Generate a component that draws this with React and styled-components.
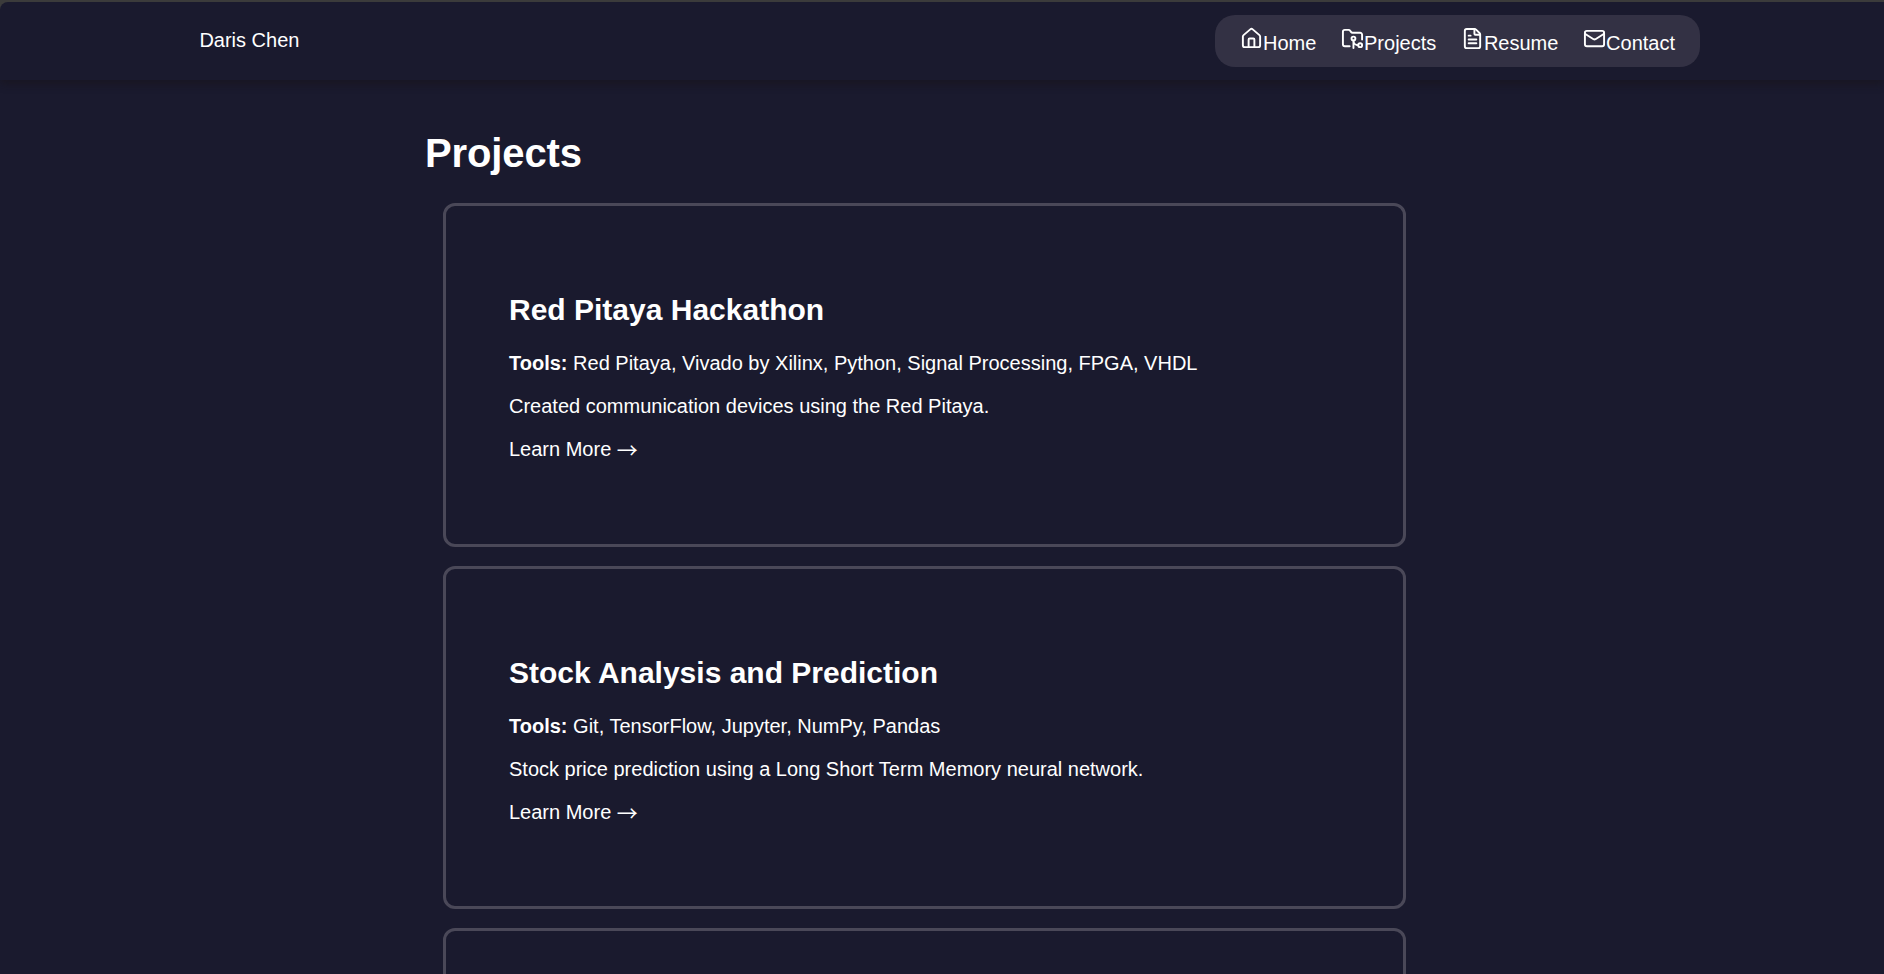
import React from "react";
import styled, { createGlobalStyle } from "styled-components";
import { House, FolderGit2, FileText, Mail } from "lucide-react";

const GlobalStyle = createGlobalStyle`
  html, body { margin: 0; background: #1a1a2e; }
  body {
    color: #fff;
    font: 20px/23px "Liberation Sans", Arial, sans-serif;
    overflow: hidden;
  }
`;

const Frame = styled.div`
  height: 974px;
  box-sizing: border-box;
  overflow: hidden;
  padding-top: 2px;
  background: #3b3b3b;
`;

const Page = styled.div`
  height: 972px;
  overflow: hidden;
  background: #1a1a2e;
  border-top-left-radius: 8px;
`;

const Header = styled.header`
  height: 78px;
  box-sizing: border-box;
  padding: 13px 184px 0 199.4px;
  display: flex;
  justify-content: space-between;
  align-items: flex-start;
  box-shadow: 0 4px 8px rgba(24, 18, 20, 0.45);
`;

const Brand = styled.a`
  margin-top: 14px;
`;

const Nav = styled.nav`
  width: 485px;
  height: 52px;
  box-sizing: border-box;
  padding: 10px 25px 0 25px;
  display: flex;
  justify-content: space-between;
  border-radius: 20px;
  background: #333144;
`;

const NavLink = styled.a`
  display: flex;
  height: 32px;
  svg { width: 23px; height: 23px; margin-top: 2px; flex: none; }
  span { margin-top: 7px; }
`;

const Main = styled.main`
  width: 1000px;
  padding: 50px 0 0 425px;
`;

const Title = styled.h1`
  margin: 0;
  font-size: 40px;
  line-height: 46px;
  letter-spacing: -0.12px;
`;

const List = styled.div`
  width: 963px;
  margin: 27px 0 0 18px;
  display: flex;
  flex-direction: column;
  gap: 19px;
`;

const Card = styled.article`
  height: 343.5px;
  flex: none;
  box-sizing: border-box;
  padding: 87px 63px 0;
  border: 3px solid #4a4858;
  border-radius: 12px;
`;

const CardTitle = styled.h2`
  margin: 0 0 25px;
  font-size: 30px;
  line-height: 34px;
`;

const Text = styled.p`
  margin: 0 0 20px;
`;

const Arrow = styled.span`
  font-family: "Noto Sans CJK JP", sans-serif;
  font-size: 21px;
  line-height: 0;
  vertical-align: -2px;
`;

const links = [
  ["Home", House],
  ["Projects", FolderGit2],
  ["Resume", FileText],
  ["Contact", Mail],
];

const projects = [
  {
    title: "Red Pitaya Hackathon",
    tools: "Red Pitaya, Vivado by Xilinx, Python, Signal Processing, FPGA, VHDL",
    text: "Created communication devices using the Red Pitaya.",
  },
  {
    title: "Stock Analysis and Prediction",
    tools: "Git, TensorFlow, Jupyter, NumPy, Pandas",
    text: "Stock price prediction using a Long Short Term Memory neural network.",
  },
];

export default function App() {
  return (
    <Frame>
      <GlobalStyle />
      <Page>
        <Header>
          <Brand>Daris Chen</Brand>
          <Nav>
            {links.map(([label, Icon]) => (
              <NavLink key={label}>
                <Icon strokeWidth={2} />
                <span>{label}</span>
              </NavLink>
            ))}
          </Nav>
        </Header>
        <Main>
          <Title>Projects</Title>
          <List>
            {projects.map((p) => (
              <Card key={p.title}>
                <CardTitle>{p.title}</CardTitle>
                <Text><strong>Tools:</strong> {p.tools}</Text>
                <Text>{p.text}</Text>
                <Text>Learn More <Arrow>→</Arrow></Text>
              </Card>
            ))}
            <Card />
          </List>
        </Main>
      </Page>
    </Frame>
  );
}
